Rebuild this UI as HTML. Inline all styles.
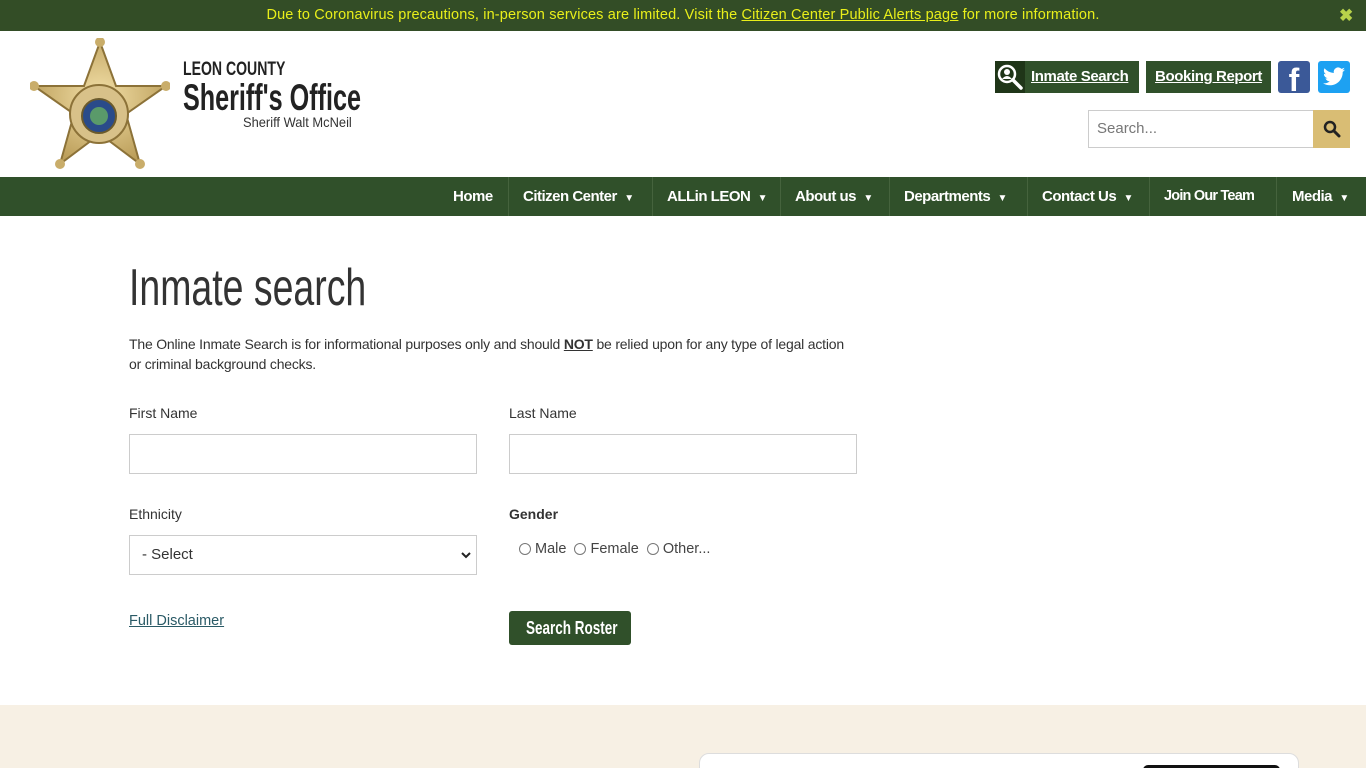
<!DOCTYPE html>
<html style="width:1366px;height:768px;overflow:hidden"><head><meta charset="utf-8"><style>
*{box-sizing:border-box;margin:0;padding:0}
body{width:1366px;height:768px;overflow:hidden;background:#fff;font-family:"Liberation Sans",sans-serif;color:#333;position:relative;font-size:14px}
.a{position:absolute}
.cond{display:inline-block;transform-origin:left center;white-space:nowrap}
.top{left:0;top:0;width:1366px;height:31px;background:#334d26;color:#e9ef1a;font-size:14.5px;line-height:31px;text-align:center;letter-spacing:.15px}
.top u{color:#e9ef1a}
.nav{left:0;top:177px;width:1366px;height:39px;background:#30502a}
.nav div{position:absolute;top:0;height:39px;line-height:39px;color:#fff;font-weight:bold;font-size:15px;border-left:1px solid #45633d;white-space:nowrap;letter-spacing:-.5px}
.lbl{font-size:14px;color:#333}
.inp{border:1px solid #ccc;height:40px;width:348px;background:#fff}
</style></head><body>
<div class="a top">Due to Coronavirus precautions, in-person services are limited. Visit the <u>Citizen Center Public Alerts page</u> for more information.</div>
<div class="a" style="left:1339px;top:6px;color:#b8d24a;font-size:17px;font-weight:bold">✖</div>

<svg class="a" style="left:30px;top:38px" width="140" height="132" viewBox="0 0 140 132">
<defs><radialGradient id="g" cx="50%" cy="45%" r="60%"><stop offset="0" stop-color="#f3e0a8"/><stop offset="1" stop-color="#b89a55"/></radialGradient></defs>
<polygon points="70,4 86,48 136,48 96,76 110,126 70,96 30,126 44,76 4,48 54,48" fill="url(#g)" stroke="#8c7238" stroke-width="2"/>
<circle cx="70" cy="4" r="5" fill="#c9ad6a"/><circle cx="4" cy="48" r="5" fill="#c9ad6a"/><circle cx="136" cy="48" r="5" fill="#c9ad6a"/><circle cx="30" cy="126" r="5" fill="#c9ad6a"/><circle cx="110" cy="126" r="5" fill="#c9ad6a"/>
<circle cx="69" cy="76" r="29" fill="#d8c189" stroke="#8c7238" stroke-width="2"/>
<circle cx="69" cy="78" r="17" fill="#2a4b8a" stroke="#6b5a2c" stroke-width="2"/>
<circle cx="69" cy="78" r="9" fill="#5a9a6a"/>
</svg>
<div class="a" style="left:183px;top:59px;font-size:19px;font-weight:bold;color:#222"><span class="cond" style="transform:scaleX(.74)">LEON COUNTY</span></div>
<div class="a" style="left:183px;top:77px;font-size:37px;font-weight:bold;color:#222;line-height:42px"><span class="cond" style="transform:scaleX(.68)">Sheriff's Office</span></div>
<div class="a" style="left:243px;top:114px;font-size:14px;color:#333"><span class="cond" style="transform:scaleX(.92)">Sheriff Walt McNeil</span></div>

<div class="a" style="left:995px;top:61px;width:144px;height:32px;background:#30502a"></div>
<div class="a" style="left:995px;top:61px;width:30px;height:32px;background:#1f3518"></div>
<svg class="a" style="left:996px;top:63px" width="28" height="28" viewBox="0 0 28 28"><circle cx="11" cy="11" r="8" fill="none" stroke="#fff" stroke-width="2.5"/><circle cx="11" cy="9" r="3" fill="#fff"/><path d="M6 16q5-6 10 0" fill="#fff"/><path d="M17 17l8 8" stroke="#fff" stroke-width="3.5" stroke-linecap="round"/></svg>
<div class="a" style="left:1031px;top:68px;color:#fff;font-weight:bold;font-size:15px;text-decoration:underline;letter-spacing:-.4px">Inmate Search</div>
<div class="a" style="left:1146px;top:61px;width:125px;height:32px;background:#30502a;color:#fff;font-weight:bold;font-size:15px;text-decoration:underline;line-height:31px;text-align:center;letter-spacing:-.4px">Booking Report</div>
<div class="a" style="left:1278px;top:61px;width:32px;height:32px;background:#3b5998;border-radius:3px;color:#fff;font-weight:bold;font-size:32px;line-height:38px;text-align:center;overflow:hidden">f</div>
<div class="a" style="left:1318px;top:61px;width:32px;height:32px;background:#1da1f2;border-radius:3px"></div>
<svg class="a" style="left:1321px;top:65px" width="26" height="24" viewBox="0 0 24 24"><path fill="#fff" d="M23 4.6c-.8.4-1.7.6-2.6.7.9-.6 1.6-1.4 2-2.5-.9.5-1.900.9-2.9 1.1A4.5 4.5 0 0 0 11.8 8 12.8 12.8 0 0 1 2.5 3.300a4.5 4.5 0 0 0 1.4 6 4.4 4.4 0 0 1-2-.6 4.5 4.5 0 0 0 3.600 4.5 4.5 4.5 0 0 1-2 .1 4.5 4.5 0 0 0 4.200 3.100A9 9 0 0 1 1 18.300 12.8 12.8 0 0 0 7.900 20.300c8.300 0 12.800-6.900 12.800-12.800v-.6c.9-.6 1.600-1.400 2.300-2.300z"/></svg>

<div class="a" style="left:1088px;top:110px;width:226px;height:38px;border:1px solid #ccc;color:#777;font-size:15px;line-height:36px;padding-left:8px">Search...</div>
<div class="a" style="left:1313px;top:110px;width:37px;height:38px;background:#d9bd74"></div>
<svg class="a" style="left:1323px;top:120px" width="18" height="18" viewBox="0 0 18 18"><circle cx="7" cy="7" r="5" fill="none" stroke="#222" stroke-width="2.5"/><path d="M11 11l5 5" stroke="#222" stroke-width="3" stroke-linecap="round"/></svg>

<div class="a nav">
<div style="left:438px;width:70px;border-left:none;padding-left:15px">Home</div>
<div style="left:508px;width:144px;padding-left:14px">Citizen Center &nbsp;<span style="font-size:10px">▼</span></div>
<div style="left:652px;width:128px;padding-left:14px">ALLin LEON &nbsp;<span style="font-size:10px">▼</span></div>
<div style="left:780px;width:109px;padding-left:14px">About us &nbsp;<span style="font-size:10px">▼</span></div>
<div style="left:889px;width:138px;padding-left:14px">Departments &nbsp;<span style="font-size:10px">▼</span></div>
<div style="left:1027px;width:122px;padding-left:14px">Contact Us &nbsp;<span style="font-size:10px">▼</span></div>
<div style="left:1149px;width:127px;padding-left:14px;font-size:14.5px;letter-spacing:-.8px">Join Our Team</div>
<div style="left:1276px;width:90px;padding-left:15px">Media &nbsp;<span style="font-size:10px">▼</span></div>
</div>

<div class="a" style="left:129px;top:258px;font-size:52px;color:#333;line-height:60px"><span class="cond" style="transform:scaleX(.72)">Inmate search</span></div>
<div class="a" style="left:129px;top:334px;width:720px;font-size:14px;line-height:20px;letter-spacing:-.2px">The Online Inmate Search is for informational purposes only and should <b><u>NOT</u></b> be relied upon for any type of legal action or criminal background checks.</div>

<div class="a lbl" style="left:129px;top:405px">First Name</div>
<div class="a inp" style="left:129px;top:434px"></div>
<div class="a lbl" style="left:509px;top:405px">Last Name</div>
<div class="a inp" style="left:509px;top:434px"></div>
<div class="a lbl" style="left:129px;top:506px">Ethnicity</div>
<div class="a inp" style="left:129px;top:535px;font-size:15px;line-height:38px;padding-left:12px">- Select</div>
<svg class="a" style="left:461px;top:551px" width="10" height="8" viewBox="0 0 10 8"><path d="M1 2l4 4 4-4" fill="none" stroke="#222" stroke-width="2"/></svg>
<div class="a lbl" style="left:509px;top:506px;font-weight:bold">Gender</div>
<div class="a" style="left:519px;top:541px;font-size:14.5px;color:#444;display:flex;align-items:center;gap:4px">
<span style="width:12px;height:12px;border:1px solid #777;border-radius:50%;display:inline-block"></span>Male&nbsp;
<span style="width:12px;height:12px;border:1px solid #777;border-radius:50%;display:inline-block"></span>Female&nbsp;
<span style="width:12px;height:12px;border:1px solid #777;border-radius:50%;display:inline-block"></span>Other...</div>
<div class="a" style="left:129px;top:613px;color:#2a5a66;text-decoration:underline;font-size:14.5px">Full Disclaimer</div>
<div class="a" style="left:509px;top:611px;width:122px;height:34px;background:#30502a;border-radius:3px;color:#fff;font-weight:bold;font-size:18px;line-height:34px;padding-left:17px"><span class="cond" style="transform:scaleX(.75)">Search Roster</span></div>

<div class="a" style="left:0;top:705px;width:1366px;height:63px;background:#f7f0e4;overflow:hidden">
<div class="a" style="left:699px;top:48px;width:600px;height:30px;background:#fff;border:1px solid #ddd;border-radius:10px"></div>
<div class="a" style="left:1143px;top:60px;width:137px;height:10px;background:#111;border-radius:6px"></div>
</div>
</body></html>
